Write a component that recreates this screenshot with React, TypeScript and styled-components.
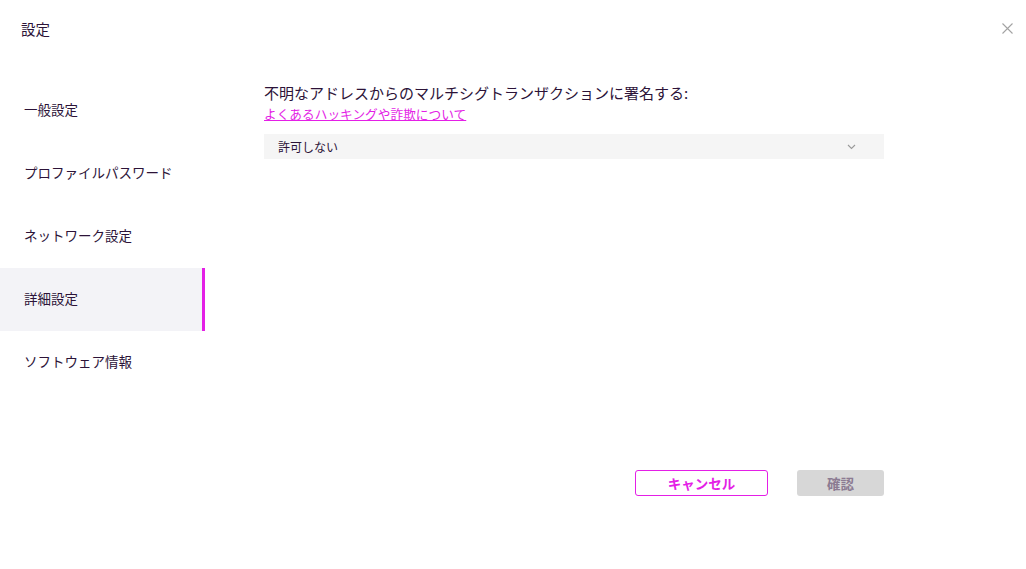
import { createGlobalStyle } from "styled-components";
import styled from "styled-components";

const GlobalStyle = createGlobalStyle`
    body {
        margin: 0;
        background: #ffffff;
        font-family: "Noto Sans CJK JP", "Noto Sans", sans-serif;
        color: #2c1338;
    }
`;

const PINK = "#e41fe6";

const Page = styled.div`
    width: 1026px;
    height: 569px;
    display: flex;
    flex-direction: column;
`;

const Header = styled.div`
    height: 60px;
    display: flex;
    align-items: center;
    justify-content: space-between;
    padding: 0 12px 2px 21px;
    box-sizing: border-box;
`;

const Title = styled.h1`
    margin: 0;
    font-size: 14.5px;
    font-weight: 400;
    line-height: 20px;
`;

const Close = styled.button`
    border: none;
    background: none;
    padding: 0;
    width: 14px;
    height: 14px;
    display: flex;
    align-items: center;
    justify-content: center;
    margin-top: -1px;
    cursor: pointer;
`;

const Body = styled.div`
    display: flex;
    flex: 1;
`;

const Sidebar = styled.nav`
    width: 205px;
    padding-top: 19px;
    display: flex;
    flex-direction: column;
`;

const NavItem = styled.div<{ $active?: boolean }>`
    height: 63px;
    box-sizing: border-box;
    display: flex;
    align-items: center;
    padding: 0 0 3px 24px;
    font-size: 13.5px;
    background: ${(p) => (p.$active ? "#f3f3f7" : "transparent")};
    border-right: 3px solid ${(p) => (p.$active ? PINK : "transparent")};
    cursor: pointer;
`;

const Content = styled.div`
    width: 620px;
    margin-left: 59px;
    padding-top: 23px;
    display: flex;
    flex-direction: column;
`;

const Label = styled.div`
    font-size: 15px;
    line-height: 20px;
`;

const Link = styled.a`
    margin-top: 2px;
    font-size: 12.7px;
    line-height: 18px;
    color: ${PINK};
    text-decoration: underline;
    align-self: flex-start;
    cursor: pointer;
`;

const Select = styled.div`
    margin-top: 11px;
    height: 25px;
    background: #f5f5f5;
    display: flex;
    align-items: center;
    justify-content: space-between;
    padding: 0 28px 0 14px;
    font-size: 12px;
    cursor: pointer;
`;

const Footer = styled.div`
    margin-top: 311px;
    display: flex;
    justify-content: flex-end;
    gap: 29px;
`;

const Button = styled.button<{ $primary?: boolean }>`
    height: 26px;
    box-sizing: border-box;
    border-radius: 3px;
    font-family: inherit;
    font-weight: 700;
    font-size: 13.5px;
    padding: 0;
    cursor: pointer;
    width: ${(p) => (p.$primary ? "87px" : "133px")};
    border: ${(p) => (p.$primary ? "none" : `1px solid ${PINK}`)};
    background: ${(p) => (p.$primary ? "#d7d7d7" : "#ffffff")};
    color: ${(p) => (p.$primary ? "#8c7b92" : PINK)};
`;

const items = ["一般設定", "プロファイルパスワード", "ネットワーク設定", "詳細設定", "ソフトウェア情報"];

export default function App() {
    return (
        <Page>
            <GlobalStyle />
            <Header>
                <Title>設定</Title>
                <Close aria-label="close">
                    <svg width="11" height="11" viewBox="0 0 11 11">
                        <path d="M0.5 0.5 L10.5 10.5 M10.5 0.5 L0.5 10.5" stroke="#a3a3a3" strokeWidth="1.1" />
                    </svg>
                </Close>
            </Header>
            <Body>
                <Sidebar>
                    {items.map((it) => (
                        <NavItem key={it} $active={it === "詳細設定"}>
                            {it}
                        </NavItem>
                    ))}
                </Sidebar>
                <Content>
                    <Label>不明なアドレスからのマルチシグトランザクションに署名する:</Label>
                    <Link>よくあるハッキングや詐欺について</Link>
                    <Select>
                        <span>許可しない</span>
                        <svg width="9" height="6" viewBox="0 0 9 6">
                            <path d="M1 1 L4.5 4.5 L8 1" fill="none" stroke="#9a9a9a" strokeWidth="1.1" />
                        </svg>
                    </Select>
                    <Footer>
                        <Button>キャンセル</Button>
                        <Button $primary>確認</Button>
                    </Footer>
                </Content>
            </Body>
        </Page>
    );
}
